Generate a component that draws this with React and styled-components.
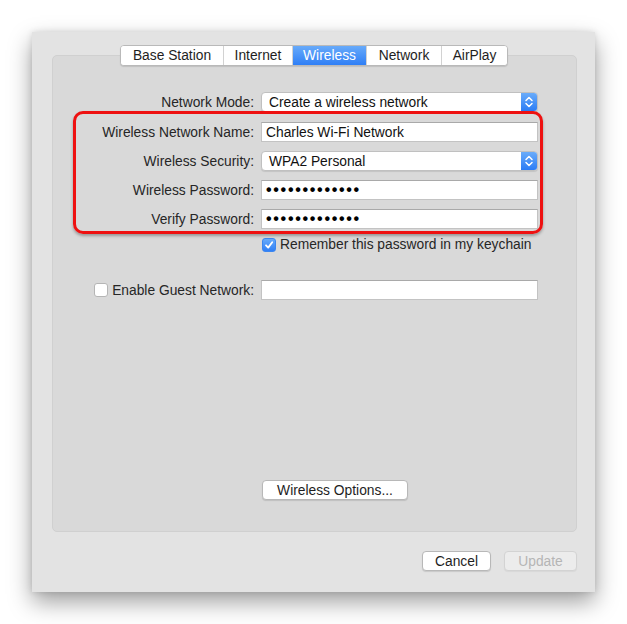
import styled, { createGlobalStyle } from 'styled-components';

const GlobalStyle = createGlobalStyle`
  html, body {
    margin: 0;
    padding: 0;
    background: #ffffff;
  }
  body {
    font-family: "Liberation Sans", Arial, sans-serif;
    font-size: 13.8px;
    color: #222;
  }
`;

const Page = styled.div`
  width: 627px;
  height: 624px;
  padding: 32px 0 0 32px;
  box-sizing: border-box;
`;

const Window = styled.div`
  width: 563px;
  height: 560px;
  background: #e3e3e3;
  box-shadow: 0 10px 22px rgba(0, 0, 0, 0.38), 0 0 6px rgba(0, 0, 0, 0.12);
  display: flex;
  flex-direction: column;
  box-sizing: border-box;
  padding: 13px 18px 0 20px;
`;

const TabBar = styled.div`
  align-self: center;
  margin-right: 1px;
  display: flex;
  height: 21px;
  border: 1px solid #b9b9b9;
  border-radius: 4px;
  background: #fff;
  box-shadow: 0 1px 1px rgba(0, 0, 0, 0.12);
  overflow: hidden;
  position: relative;
  z-index: 1;
  box-sizing: border-box;
`;

const Tab = styled.div`
  width: ${p => p.w}px;
  display: flex;
  align-items: center;
  justify-content: center;
  color: ${p => (p.active ? '#fff' : '#1e1e1e')};
  background: ${p => (p.active ? 'linear-gradient(#67aafa, #2f7ff6)' : '#fff')};
  border-left: ${p => (p.first ? 'none' : '1px solid #d2d2d2')};
  box-sizing: border-box;
`;

const Panel = styled.div`
  margin-top: -11px;
  width: 525px;
  height: 477px;
  background: #d9d9d9;
  border: 1px solid #d0d0d0;
  border-radius: 5px;
  box-sizing: border-box;
  display: flex;
  flex-direction: column;
  padding: 36px 38px 31px 0;
`;

const Row = styled.div`
  display: flex;
  justify-content: flex-end;
  align-items: center;
  gap: 7px;
  height: 20px;
  margin-top: ${p => p.mt || 0}px;
`;

const Label = styled.div`
  white-space: nowrap;
  color: #262626;
`;

const TextField = styled.div`
  width: 277px;
  height: 20px;
  box-sizing: border-box;
  background: #fff;
  border: 1px solid #c3c3c3;
  border-top-color: #a9a9a9;
  padding: 0 4px;
  display: flex;
  align-items: center;
  color: #111;
`;

const Dots = styled.span`
  font-size: 16px;
  font-weight: bold;
  letter-spacing: 1.7px;
  line-height: 1;
  color: #000;
`;

const Popup = styled.div`
  width: 277px;
  height: 20px;
  box-sizing: border-box;
  background: #fff;
  border: 1px solid #c0c0c0;
  border-radius: 4px;
  box-shadow: 0 1px 1px rgba(0, 0, 0, 0.1);
  display: flex;
  align-items: center;
  overflow: hidden;
`;

const PopupText = styled.div`
  flex: 1;
  padding-left: 7px;
  color: #111;
`;

const Stepper = styled.div`
  width: 16px;
  height: 100%;
  background: linear-gradient(#6aacfa, #2b7cf5);
  display: flex;
  align-items: center;
  justify-content: center;
`;

const Highlight = styled.div`
  margin: -1px -5px 0 20px;
  border: 3px solid #ee1111;
  border-radius: 10px;
  box-shadow: 0 2px 3px rgba(0, 0, 0, 0.3);
  padding: 8px 2px 2px 0;
  display: flex;
  flex-direction: column;
  gap: 9px;
`;

const CheckRow = styled.div`
  display: flex;
  justify-content: flex-end;
  margin-top: ${p => p.mt || 0}px;
`;

const CheckCell = styled.label`
  width: ${p => (p.w ? `${p.w}px` : 'auto')};
  display: flex;
  align-items: center;
  gap: 4px;
  padding-left: ${p => p.pl || 0}px;
  box-sizing: border-box;
  white-space: nowrap;
  color: #262626;
`;

const Box = styled.span`
  width: 14px;
  height: 14px;
  box-sizing: border-box;
  border-radius: 3px;
  border: 1px solid ${p => (p.checked ? '#3b86f0' : '#b5b5b5')};
  background: ${p => (p.checked ? 'linear-gradient(#68abfa, #2f7ff6)' : '#fff')};
  display: flex;
  align-items: center;
  justify-content: center;
  flex-shrink: 0;
`;

const ButtonRow = styled.div`
  display: flex;
  justify-content: ${p => p.align || 'flex-end'};
  gap: 13px;
  margin-top: ${p => p.mt || 'auto'};
  padding-left: ${p => p.pl || 0}px;
`;

const Button = styled.div`
  width: ${p => p.w}px;
  height: 20px;
  box-sizing: border-box;
  display: flex;
  align-items: center;
  justify-content: center;
  border-radius: 4px;
  border: 1px solid ${p => (p.disabled ? '#d3d3d3' : '#b8b8b8')};
  background: ${p => (p.disabled ? '#ececec' : '#fff')};
  color: ${p => (p.disabled ? '#b5b5b5' : '#1e1e1e')};
  box-shadow: 0 1px 1px rgba(0, 0, 0, ${p => (p.disabled ? 0.05 : 0.12)});
`;

const Footer = styled(ButtonRow)`
  margin-top: 19px;
`;

const Chevrons = () => (
  <svg width="10" height="14" viewBox="0 0 10 14" fill="none" stroke="#fff" strokeWidth="1.5" strokeLinecap="round" strokeLinejoin="round">
    <path d="M2 5.5 L5 2.5 L8 5.5" />
    <path d="M2 8.5 L5 11.5 L8 8.5" />
  </svg>
);

const Check = () => (
  <svg width="10" height="10" viewBox="0 0 10 10" fill="none" stroke="#fff" strokeWidth="1.8" strokeLinecap="round" strokeLinejoin="round">
    <path d="M2 5.3 L4.2 7.6 L8.2 2.2" />
  </svg>
);

const tabs = [
  { name: 'Base Station', w: 102 },
  { name: 'Internet', w: 69 },
  { name: 'Wireless', w: 74, active: true },
  { name: 'Network', w: 75 },
  { name: 'AirPlay', w: 66 },
];

const dots = '•'.repeat(13);

const App = () => {
  return (
    <Page>
      <GlobalStyle />
      <Window>
        <TabBar>
          {tabs.map((t, i) => (
            <Tab key={t.name} w={t.w} active={t.active} first={i === 0}>
              {t.name}
            </Tab>
          ))}
        </TabBar>
        <Panel>
          <Row>
            <Label>Network Mode:</Label>
            <Popup>
              <PopupText>Create a wireless network</PopupText>
              <Stepper><Chevrons /></Stepper>
            </Popup>
          </Row>
          <Highlight>
            <Row>
              <Label>Wireless Network Name:</Label>
              <TextField>Charles Wi-Fi Network</TextField>
            </Row>
            <Row>
              <Label>Wireless Security:</Label>
              <Popup>
                <PopupText>WPA2 Personal</PopupText>
                <Stepper><Chevrons /></Stepper>
              </Popup>
            </Row>
            <Row>
              <Label>Wireless Password:</Label>
              <TextField><Dots>{dots}</Dots></TextField>
            </Row>
            <Row>
              <Label>Verify Password:</Label>
              <TextField><Dots>{dots}</Dots></TextField>
            </Row>
          </Highlight>
          <CheckRow mt={3}>
            <CheckCell w={277} pl={1}>
              <Box checked><Check /></Box>
              Remember this password in my keychain
            </CheckCell>
          </CheckRow>
          <Row mt={28}>
            <CheckCell>
              <Box />
              <Label>Enable Guest Network:</Label>
            </CheckCell>
            <TextField />
          </Row>
          <ButtonRow align="flex-start" pl={209}>
            <Button w={146}>Wireless Options...</Button>
          </ButtonRow>
        </Panel>
        <Footer>
          <Button w={69}>Cancel</Button>
          <Button w={73} disabled>Update</Button>
        </Footer>
      </Window>
    </Page>
  );
};

export default App;
